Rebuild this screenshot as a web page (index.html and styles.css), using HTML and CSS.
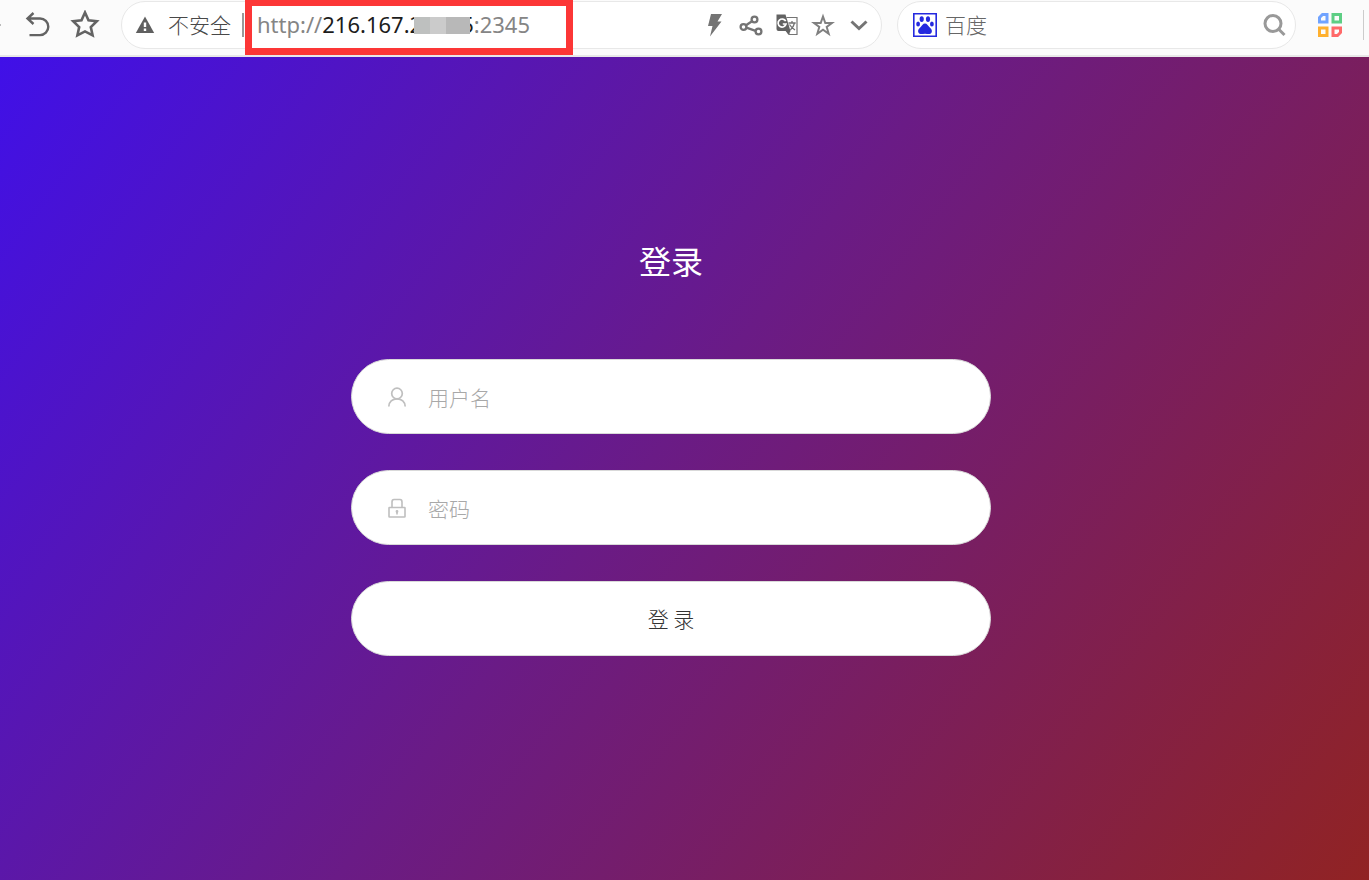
FILE: index.html
```html
<!DOCTYPE html>
<html lang="zh-CN">
<head>
<meta charset="utf-8">
<title>登录</title>
<link rel="stylesheet" href="styles.css">
</head>
<body>
<header class="toolbar">
  <span class="edge-dot"></span>
  <button class="icon-btn back" type="button" aria-label="后退">
    <svg width="28" height="28" viewBox="0 0 28 28" fill="none" stroke="#636363" stroke-width="2.4"><path d="M9.5 2 3.5 7.5 9.5 13M3.5 7.5H16a8.3 8.3 0 0 1 0 16.600H5.500" /></svg>
  </button>
  <button class="icon-btn" type="button" aria-label="收藏">
    <svg width="30" height="30" viewBox="0 0 30 30" fill="none" stroke="#636363" stroke-width="2.6"><path d="M15 2.500 18.500 10.300 26.800 11.200 20.800 17.100 22.600 25.300 15 21.400 7.400 25.300 9.200 17.100 3.200 11.200 11.500 10.300Z"/></svg>
  </button>
  <div class="address">
    <svg class="warn" width="20" height="20" viewBox="0 0 20 20"><path d="M10 1.500 19.200 18H.8Z" fill="#606060"/><path d="M10 7.500v4.500M10 13.500v2.500" stroke="#fff" stroke-width="2.400"/></svg>
    <span class="insecure">不安全</span>
    <span class="divider"></span>
    <div class="url"><span>http://</span><span class="host">216.167.2<span class="hidden-part"><i class="m1"></i><i class="m2"></i><i class="m3"></i></span>5</span><span>:2345</span></div>
    <div class="tools">
      <button class="icon-btn" type="button" aria-label="加速"><svg width="24" height="26" viewBox="0 0 24 26"><path d="M8 2H19L14.500 9.500H18.500L7 24.500 9.500 14H5Z" fill="#747474"/></svg></button>
      <button class="icon-btn" type="button" aria-label="分享"><svg width="24" height="26" viewBox="0 0 24 26" fill="none" stroke="#747474" stroke-width="2.300"><circle cx="4.500" cy="15" r="2.900"/><circle cx="15.500" cy="7.500" r="2.900"/><circle cx="19.500" cy="19.500" r="2.900"/><path d="M7 13.300 13 9.200M7.400 15.700 16.600 18.800"/></svg></button>
      <button class="icon-btn" type="button" aria-label="翻译"><svg width="24" height="26" viewBox="0 0 24 26" fill="none"><path d="M11.500 5.500H22v17H14.500L11 18.500" fill="#fff" stroke="#747474" stroke-width="1.200"/><path d="M1.500 2.500h9L15.500 19H3.500Q1.500 19 1.500 17Z" fill="#626262"/><path d="M11 19h4.500L13.500 23Z" fill="#626262"/><path d="M10.700 9.200A4 4 0 1 0 11 12H7.800" stroke="#fff" stroke-width="1.700"/><path d="M13.500 11h7.200M17 9v2M19.500 11q-.8 4-4.200 7M14.500 12.500q1.800 3 5.500 5.500" stroke="#747474" stroke-width="1.300"/></svg></button>
      <button class="icon-btn" type="button" aria-label="加入书签"><svg width="24" height="26" viewBox="0 0 24 26" fill="none" stroke="#808080" stroke-width="2"><path d="M12 4.500 14.300 11H21L15.700 15 17.700 21.800 12 17.800 6.300 21.800 8.300 15 3 11H9.700Z"/></svg></button>
      <button class="icon-btn" type="button" aria-label="展开"><svg width="24" height="26" viewBox="0 0 24 26" fill="none" stroke="#747474" stroke-width="3"><path d="M4.500 9.500 12 16.500 19.500 9.500"/></svg></button>
    </div>
  </div>
  <form class="search">
    <svg width="24" height="24" viewBox="0 0 24 24"><path fill="#fff" stroke="#2529df" stroke-width="1.600" d="M.8.8h22.400v22.400H.8Z"/><g fill="#2529df"><ellipse cx="8.700" cy="6.100" rx="2.100" ry="2.900"/><ellipse cx="15" cy="6.100" rx="2.100" ry="2.900"/><ellipse cx="5.100" cy="11" rx="1.900" ry="2.600"/><ellipse cx="18.900" cy="11" rx="1.900" ry="2.600"/><path d="M12 10.500c2.200 0 2.700 2 4.300 3.500 1.700 1.600 3.400 3.400 2.300 5.500-1.200 2.400-4 1.200-6.600 1.200s-5.400 1.200-6.600-1.200c-1.100-2.100.6-3.900 2.300-5.500C9.300 12.500 9.800 10.500 12 10.500Z"/></g></svg>
    <input type="search" aria-label="搜索" placeholder="百度">
    <button class="icon-btn" type="submit" aria-label="搜索"><svg width="24" height="24" viewBox="0 0 24 24" fill="none" stroke="#999" stroke-width="3"><circle cx="11" cy="10.500" r="8"/><path d="M16.500 16 22.500 22"/></svg></button>
  </form>
  <button class="icon-btn apps" type="button" aria-label="应用"><svg width="26" height="26" viewBox="0 0 26 26" fill="none" stroke-width="3"><path stroke="#70a3ff" d="M5.500 2.500H10v7.500H2.500V5.500Z"/><path stroke="#5dce84" d="M16 2.500H23.500V10H16Z"/><path stroke="#ffb02e" d="M2.500 16H10V23.500H2.500Z"/><path stroke="#ff6969" d="M16 16H23.500V20.500L20.500 23.500H16Z"/></svg></button>
  <span class="end-line"></span>
</header>
<main class="page">
  <form class="login">
    <h1>登录</h1>
    <label class="field">
      <svg width="22" height="22" viewBox="0 0 22 22" fill="none" stroke="#bfbfbf" stroke-width="1.700"><circle cx="11" cy="7.500" r="5.300"/><path d="M2.800 20.500c0-4.500 3.700-7.700 8.200-7.700s8.200 3.200 8.200 7.700"/></svg>
      <input type="text" aria-label="用户名" placeholder="用户名" autocomplete="username">
    </label>
    <label class="field">
      <svg width="22" height="22" viewBox="0 0 22 22" fill="none" stroke="#bfbfbf" stroke-width="1.600"><rect x="3" y="10.500" width="16" height="9.500" rx=".5"/><path d="M6 10.500V5Q6 2.500 8 2.500H14Q16 2.500 16 5V10.500M11 14v3.500"/><circle cx="11" cy="14.500" r=".6"/></svg>
      <input type="password" aria-label="密码" placeholder="密码" autocomplete="current-password">
    </label>
    <button class="submit" type="submit">登 录</button>
  </form>
</main>
</body>
</html>
```
FILE: styles.css
```css
* { box-sizing: border-box; }

body {
  margin: 0;
  min-height: 100vh;
  display: flex;
  flex-direction: column;
  font-family: "Noto Sans", "Noto Sans CJK SC", sans-serif;
}

button, input { font: inherit; }

.icon-btn {
  display: flex;
  padding: 0;
  border: 0;
  background: none;
}

svg { flex: none; }

.toolbar {
  display: flex;
  align-items: center;
  height: 57px;
  padding-bottom: 5px;
  background: #fbfbfb;
  border-bottom: 2px solid #e8e8e8;
}

.edge-dot { width: 1px; height: 2px; background: #bbb; }
.back { margin: 0 18px 0 23px; }

.address, .search {
  display: flex;
  align-items: center;
  height: 48px;
  background: #fff;
  border: 1px solid #e8e8e8;
  border-radius: 24px;
}

.address { flex: 1; margin-left: 21px; padding: 0 10px 0 13px; }
.warn { margin-right: 13px; }
.insecure {
  padding-bottom: 2px;
  font-family: "Noto Sans CJK SC", sans-serif;
  font-weight: 300;
  font-size: 21px;
  color: #484848;
  white-space: nowrap;
}
.divider { width: 2px; height: 24px; margin: 0 1px 0 11px; background: #999; }

.url {
  flex: none;
  width: 328px;
  height: 56px;
  padding-left: 5px;
  border: 7px solid #fc3636;
  margin-bottom: -4px;
  line-height: 36px;
  font-size: 22px;
  color: #858585;
  white-space: nowrap;
}

.host { color: #1c1c1c; }

.hidden-part {
  display: inline-flex;
  width: 56px;
  height: 17px;
  margin: 0 -9px 0 -8px;
  position: relative;
  vertical-align: -1px;
}

.hidden-part i { flex: 1; }
.m1 { background: #bec0bf; }
.m2 { background: #cbcbcb; }
.hidden-part .m3 { flex: 1.5; background: #b8b8b8; }

.tools { display: flex; gap: 12px; margin-left: auto; }

.search { flex: 0 1 399px; margin-left: 15px; padding: 0 9px 0 15px; }
.search input {
  flex: 1;
  min-width: 0;
  margin-left: 8px;
  padding: 0 0 2px;
  border: 0;
  outline: 0;
  background: none;
  font-family: "Noto Sans CJK SC", sans-serif;
  font-weight: 300;
  font-size: 21px;
}
.search input::placeholder { color: #666; opacity: 1; }

.apps { margin: 0 20px 0 21px; }
.end-line { width: 1px; height: 30px; margin-right: 5px; background: #ccc; }

.page {
  flex: 1;
  padding: 179px 27px 0 0;
  background: linear-gradient(127deg, #4010e8 0%, #6a1b86 48%, #912323 100%);
  font-family: "Noto Sans CJK SC", sans-serif;
}

.login {
  display: flex;
  flex-direction: column;
  gap: 36px;
  width: 90%;
  max-width: 640px;
  margin: 0 auto;
}

.login h1 {
  margin: 0 0 39px;
  font-size: 32px;
  line-height: 48px;
  font-weight: 400;
  text-align: center;
  color: #fff;
}

.field, .submit {
  display: flex;
  align-items: center;
  height: 75px;
  background: #fff;
  border: 1px solid #d9d9d9;
  border-radius: 38px;
  font-weight: 300;
  font-size: 21px;
}

.field { padding: 0 34px; }

.field input {
  flex: 1;
  min-width: 0;
  margin-left: 20px;
  padding: 0;
  border: 0;
  outline: 0;
  background: none;
}
.field input::placeholder { color: #a8a8a8; opacity: 1; }

.submit { justify-content: center; padding-bottom: 2px; color: #333; }
```
